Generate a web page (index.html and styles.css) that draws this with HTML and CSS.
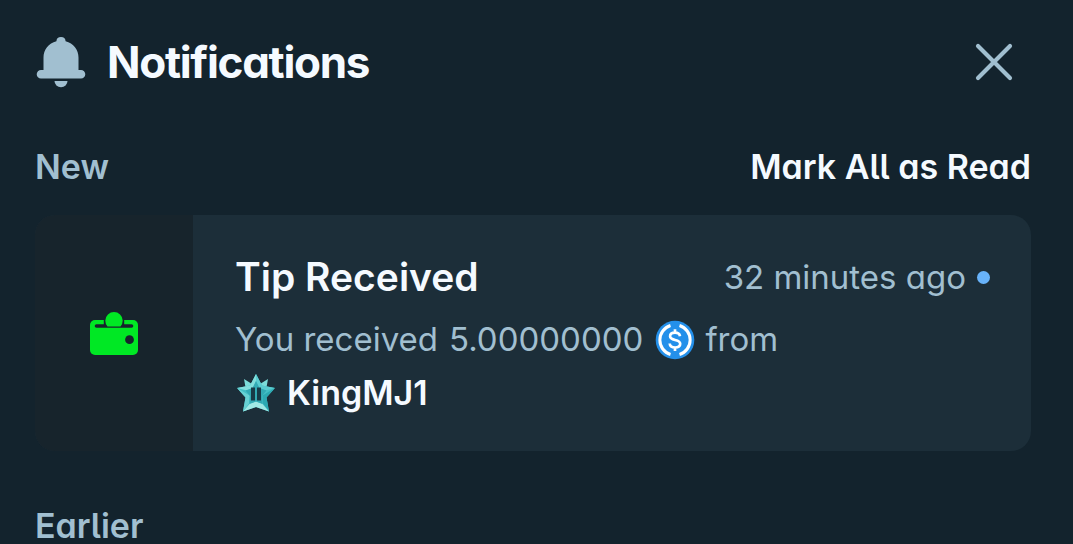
FILE: index.html
```html
<!DOCTYPE html>
<html lang="en">
<head>
<meta charset="utf-8">
<title>Notifications</title>
<link rel="stylesheet" href="styles.css">
</head>
<body>
<main class="panel">
  <header class="header">
    <svg class="bell" viewBox="0 0 50 52" fill="currentColor" aria-hidden="true">
      <path d="M25 1a4.6 4.6 0 0 1 4.6 4.2C37.500 7.200 42.500 13.500 42.500 21.500V34H45a4.300 4.300 0 0 1 0 8.600H5A4.300 4.300 0 0 1 5 34h2.500V21.500c0-8 5-14.300 12.900-16.300A4.600 4.600 0 0 1 25 1Z"/>
      <path d="M18.500 45h13a6.500 6.200 0 0 1-13 0Z"/>
    </svg>
    <h1 class="title">Notifications</h1>
    <button class="close" aria-label="Close">
      <svg class="close-icon" viewBox="0 0 38 38" aria-hidden="true"><path d="M3 3l32 32M35 3L3 35" stroke="currentColor" stroke-width="4.200" stroke-linecap="round"/></svg>
    </button>
  </header>
  <div class="section-bar">
    <h2 class="section-title new">New</h2>
    <button class="mark-read">Mark All as Read</button>
  </div>
  <article class="card">
    <div class="card-side">
      <svg class="wallet" viewBox="0 0 50 46" aria-hidden="true">
        <rect x="1" y="10" width="48" height="35" rx="5" fill="#00e824"/>
        <path d="M7.500 16h35" stroke="#17242c" stroke-width="3.600" stroke-linecap="round"/>
        <path d="M14.800 16v-5.500a10 10 0 0 1 20.400 0V16Z" fill="#17242c"/>
        <path d="M18.500 16.500a8.700 8.700 0 1 1 13 0Z" fill="#00e824"/>
        <circle cx="40.500" cy="29.700" r="4.400" fill="#17242c"/>
      </svg>
    </div>
    <div class="card-body">
      <div class="card-head">
        <h3 class="card-title">Tip Received</h3>
        <div class="when"><time class="time">32 minutes ago</time><span class="dot"></span></div>
      </div>
      <div class="line">
        <span class="received">You received</span>
        <span class="amount">5.00000000</span>
        <svg class="coin" viewBox="0 0 40 40" fill="none" aria-hidden="true">
          <circle cx="20" cy="20" r="19.300" fill="#2490ea"/>
          <path d="M15.500 5.500a15.200 15.200 0 0 0 0 29M24.500 5.500a15.200 15.200 0 0 1 0 29" stroke="#fff" stroke-width="3"/>
          <path d="M25 16.200c-.4-2.300-2.200-3.500-5-3.500-3 0-4.900 1.400-4.900 3.600 0 5 10.100 2.300 10.100 7.500 0 2.300-2 3.700-5.100 3.700-3.200 0-5.200-1.400-5.400-4M20 9.200v3.500M20 27.500V31" stroke="#fff" stroke-width="2.700"/>
        </svg>
        <span class="from">from</span>
      </div>
      <div class="line">
        <svg class="star" viewBox="0 0 40 40" aria-hidden="true">
          <path d="M8 6l8 5-6 6ZM32 6l-8 5 6 6Z" fill="#7cdcd9"/>
          <path d="M20 1l6 11.500L39 15l-8.500 9.500L33 38.500 20 34 7 38.500l2.500-14L1 15l13-2.500Z" fill="#43bfc5"/>
          <path d="M20 1l-6 11.500L1 15l10 2.500L17 15l3-7Z" fill="#83dedc"/>
          <path d="M20 1l6 11.500L39 15l-10 2.500L23 15l-3-7Z" fill="#5bccd0"/>
          <path d="M1 15l8.500 9.500L7 38.500l6-8 .5-8Z" fill="#68d1d3"/>
          <path d="M39 15l-8.500 9.500L33 38.500l-6-8-.5-8Z" fill="#2ca9b2"/>
          <path d="M7 38.500L20 34l13 4.500-7-8-6-2-6 2Z" fill="#a0e9e5"/>
          <path d="M20 8l3.500 7 7 2.500-4.500 5.500.5 8L20 28.500 13.500 31l.5-8-4.500-5.500 7-2.500Z" fill="#32aab4"/>
          <path d="M15 14.500h4v13h-4ZM21 14.500h4v13h-4Z" fill="#173b48"/>
        </svg>
        <strong class="user">KingMJ1</strong>
      </div>
    </div>
  </article>
  <h2 class="section-title earlier">Earlier</h2>
</main>
</body>
</html>
```
FILE: styles.css
```css
* { box-sizing: border-box; }
body {
  margin: 0;
  background: #13232d;
  color: #f5faff;
  font-family: Inter, "Liberation Sans", sans-serif;
  font-feature-settings: "cv11" 1, "cv05" 1;
}
h1, h2, h3 { margin: 0; }
button { padding: 0; border: 0; background: none; color: inherit; font: inherit; font-feature-settings: inherit; letter-spacing: inherit; }
svg { display: block; flex: none; }
.panel { height: 544px; padding: 35px 42px 0 35px; overflow: hidden; }
.header { display: flex; align-items: center; height: 54px; color: #a1bfd0; }
.bell { width: 50px; height: 52px; margin-left: 1px; }
.title { margin-left: 21px; color: #f5faff; font-size: 44px; line-height: 54px; font-weight: 700; letter-spacing: -1.3px; white-space: nowrap; }
.close { margin: 0 18px 0 auto; }
.close-icon { width: 38px; height: 38px; }
.section-bar { display: flex; justify-content: space-between; margin-top: 58px; height: 40px; line-height: 40px; }
.section-title { color: #a1bfd0; font-size: 34px; line-height: 40px; font-weight: 600; }
.mark-read { font-size: 34px; line-height: 40px; font-weight: 600; white-space: nowrap; }
.card { display: flex; height: 236px; margin-top: 28px; border-radius: 20px; overflow: hidden; background: #1c2e39; }
.card-side { display: flex; align-items: center; justify-content: center; flex: none; width: 158px; background: #17242c; }
.wallet { width: 50px; height: 46px; }
.card-body { flex: 1; padding: 37px 41px 0 42px; white-space: nowrap; }
.card-head { display: flex; justify-content: space-between; height: 50px; margin-bottom: 11px; }
.card-title { font-size: 39px; line-height: 50px; font-weight: 600; }
.when { display: flex; align-items: center; gap: 11px; color: #a1bfd0; }
.time { font-size: 33px; line-height: 54px; }
.dot { width: 13px; height: 13px; border-radius: 50%; background: #68b3fa; }
.line { display: flex; align-items: center; height: 53px; color: #a1bfd0; font-size: 33px; line-height: 53px; }
.amount { margin-left: 11px; }
.coin { width: 40px; height: 40px; margin-left: 12px; }
.from { margin-left: 10px; }
.star { width: 40px; height: 40px; margin-left: 1px; }
.user { margin-left: 11px; color: #f5faff; font-size: 34px; font-weight: 600; }
.earlier { margin-top: 55px; }
```
